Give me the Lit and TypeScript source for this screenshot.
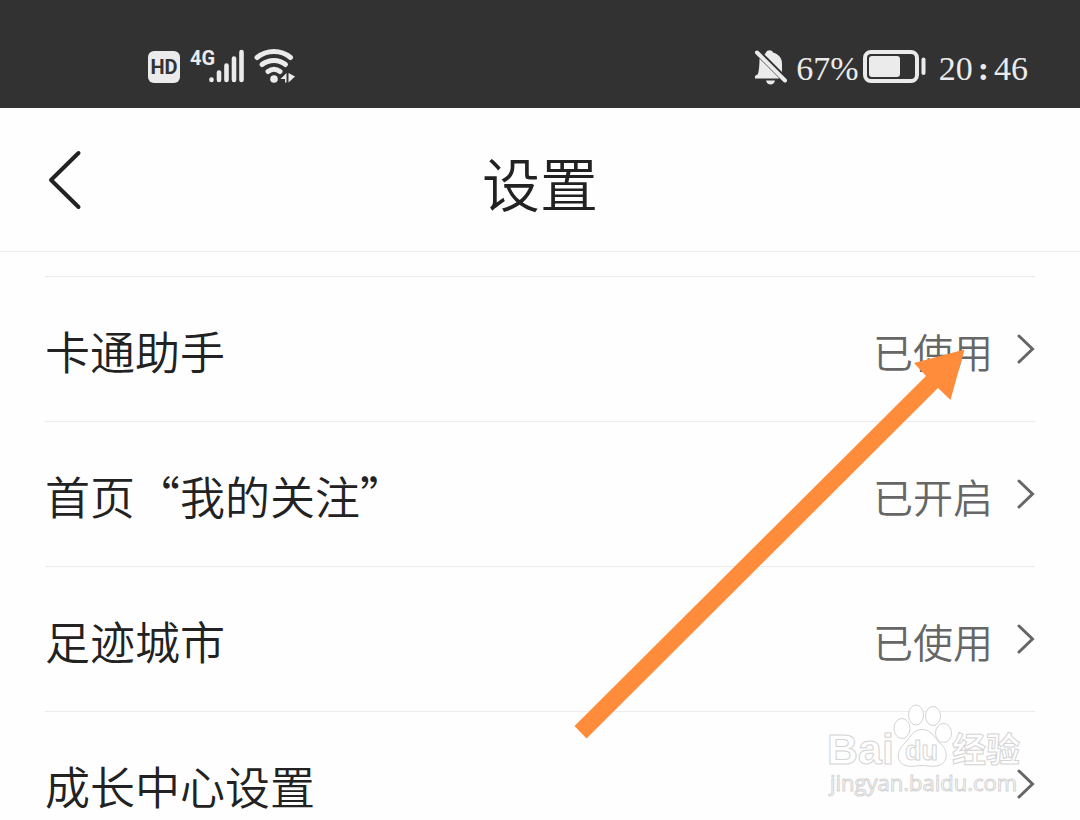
import { LitElement, html, css } from "lit";
import { customElement, property } from "lit/decorators.js";

interface Setting {
  label: string;
  value?: string;
}

const SETTINGS: Setting[] = [
  { label: "卡通助手", value: "已使用" },
  { label: "首页“我的关注”", value: "已开启" },
  { label: "足迹城市", value: "已使用" },
  { label: "成长中心设置" },
];

@customElement("status-bar")
class StatusBar extends LitElement {
  static styles = css`
    :host {
      display: flex;
      align-items: center;
      justify-content: space-between;
      box-sizing: border-box;
      height: 108px;
      padding: 26px 52px 0 147px;
      background: #323232;
      color: #ebebeb;
      font-family: "Liberation Serif", serif;
      font-size: 34px;
      line-height: 40px;
    }
    svg {
      display: block;
      flex: none;
    }
    .group {
      display: flex;
      align-items: center;
    }
    .network {
      fill: #ebebeb;
      font-family: "Roboto", sans-serif;
      font-weight: 700;
    }
    .hd {
      fill: #323232;
    }
    .percent {
      margin: 0 4px 0 8px;
      padding-top: 4px;
    }
    .clock {
      display: flex;
      margin-left: 12px;
      padding-top: 4px;
    }
    .colon {
      padding: 0 5px;
      font-weight: 700;
    }
  `;

  render() {
    return html`
      <div class="group">
        <svg class="network" width="150" height="40" viewBox="0 0 150 40" role="img" aria-label="HD 4G Wi-Fi">
          <rect x="1" y="4" width="32" height="32" rx="6" />
          <text class="hd" x="17" y="27" font-size="20" text-anchor="middle">HD</text>
          <text x="43" y="18" font-size="20">4G</text>
          <g stroke="#ebebeb" stroke-width="4.6" stroke-linecap="round" fill="none">
            <path d="M64.500 32.500V33M72 25.500V33M79.500 18.500V33M87 11.500V33M94.500 5V33" />
          </g>
          <g stroke="#ebebeb" stroke-width="5" stroke-linecap="round" fill="none">
            <path d="M110 10.500C120 2.500 134 2.500 143.500 10.500" />
            <path d="M115 17.500C122 12 132 12 138.500 17.500" />
            <path d="M121 24.500C125 21.500 129 21.500 133 24.500" />
          </g>
          <circle cx="127" cy="32" r="3.800" />
          <path d="M139.500 26V35.500H138V32H133.500ZM141.500 26L148 29.500L141.500 35.500Z" />
        </svg>
      </div>
      <div class="group">
        <svg width="34" height="36" viewBox="0 0 34 36" role="img" aria-label="静音">
          <path
            fill="#ebebeb"
            d="M12 3.500C13 .5 18 .5 19 3.500C25 5.500 28 9 28 15V23L10.500 5.500ZM5.500 9.500L25.500 29.500H1V27L4 25Q5.500 19 5.500 9.500ZM12 31.500H21Q20 35.500 16.500 35.500T12 31.500Z"
          />
          <path d="M3 3.500L31 31.500" stroke="#ebebeb" stroke-width="4" stroke-linecap="round" />
        </svg>
        <span class="percent">67%</span>
        <svg width="64" height="36" viewBox="0 0 64 36" role="img" aria-label="电量">
          <rect x="2" y="3" width="52" height="29" rx="6" fill="none" stroke="#ebebeb" stroke-width="4" />
          <rect x="6" y="7" width="31" height="21" rx="3" fill="#ebebeb" />
          <path d="M60.500 10.500V24" stroke="#ebebeb" stroke-width="4" stroke-linecap="round" />
        </svg>
        <span class="clock"><span>20</span><span class="colon">:</span><span>46</span></span>
      </div>
    `;
  }
}

@customElement("setting-row")
class SettingRow extends LitElement {
  @property() label = "";
  @property() value = "";

  static styles = css`
    :host {
      display: block;
      border-top: 1px solid #ebebeb;
    }
    .row {
      display: flex;
      align-items: center;
      box-sizing: border-box;
      width: 100%;
      height: 144px;
      padding: 0;
      border: 0;
      background: none;
      color: #222;
      font: inherit;
      font-size: 45px;
      line-height: 60px;
      text-align: left;
      cursor: pointer;
    }
    .label,
    .value {
      padding-top: 4px;
    }
    .label {
      flex: 1;
    }
    .value {
      margin-right: 24px;
      color: #666;
      font-size: 40px;
    }
    .chevron {
      display: block;
      flex: none;
    }
  `;

  render() {
    return html`
      <button class="row" type="button">
        <span class="label">${this.label}</span>
        <span class="value">${this.value}</span>
        <svg class="chevron" width="18" height="32" viewBox="0 0 18 32" aria-hidden="true">
          <path d="M2 3L15.500 16L2 29" fill="none" stroke="#666" stroke-width="3" stroke-linecap="round" />
        </svg>
      </button>
    `;
  }
}

@customElement("app-root")
class AppRoot extends LitElement {
  static styles = css`
    :host {
      display: block;
      position: relative;
      height: 100vh;
      overflow: hidden;
      background: #fefefe;
      color: #222;
      font-family: "Noto Sans CJK SC DemiLight", "Noto Sans CJK SC", sans-serif;
      font-weight: 350;
    }
    .header {
      display: grid;
      grid-template-columns: 1fr auto 1fr;
      align-items: center;
      height: 143px;
      padding: 0 45px;
      border-bottom: 1px solid #ebebeb;
    }
    .back {
      justify-self: start;
      padding: 0;
      border: 0;
      background: none;
      cursor: pointer;
    }
    .back svg {
      display: block;
    }
    .title {
      margin: 0;
      padding-top: 4px;
      font-size: 58px;
      line-height: 80px;
      font-weight: inherit;
    }
    .list {
      padding: 24px 45px 0;
    }
    .arrow {
      position: absolute;
      left: 574px;
      top: 349px;
      pointer-events: none;
    }
    .watermark {
      position: absolute;
      left: 826px;
      top: 702px;
      pointer-events: none;
      fill: #fff;
      stroke: #d4d4d4;
      stroke-width: 1;
    }
    .brand {
      font-family: "Liberation Sans", sans-serif;
      font-weight: 700;
    }
    .cjk {
      font-family: "Noto Sans CJK SC", sans-serif;
      font-weight: 700;
    }
    .site {
      font-family: "Open Sans", sans-serif;
      font-weight: 400;
    }
  `;

  render() {
    return html`
      <status-bar></status-bar>
      <header class="header">
        <button class="back" type="button" aria-label="返回">
          <svg width="40" height="64" viewBox="0 0 40 64">
            <path
              d="M33.500 5L6 32L33.500 59"
              fill="none"
              stroke="#222"
              stroke-width="4"
              stroke-linecap="round"
              stroke-linejoin="round"
            />
          </svg>
        </button>
        <h1 class="title">设置</h1>
      </header>
      <main class="list">
        ${SETTINGS.map(
          (s) => html`<setting-row .label=${s.label} .value=${s.value ?? ""}></setting-row>`
        )}
      </main>
      <svg class="watermark" width="200" height="100" viewBox="0 0 200 100" role="img" aria-label="Baidu 经验">
        <text class="brand" x="1" y="62" font-size="43">Bai</text>
        <ellipse cx="76" cy="26.500" rx="8" ry="10" />
        <ellipse cx="90" cy="13" rx="7.500" ry="10" />
        <ellipse cx="107" cy="14" rx="7.500" ry="9.500" />
        <ellipse cx="117.500" cy="31" rx="8" ry="9.500" />
        <path
          d="M96 27.500C106 27.500 109 37 115 42C123 49 122 62 111 64C106 65 101 63.500 96 63.500S86 65 81 64C70 62 70 49 78 42C84 37 86 27.500 96 27.500Z"
        />
        <text class="brand" x="79" y="58" font-size="27">du</text>
        <text class="cjk" x="126" y="60" font-size="34">经验</text>
        <text class="site" x="4" y="89" font-size="22">jingyan.baidu.com</text>
      </svg>
      <svg class="arrow" width="391" height="390" viewBox="0 0 391 390" aria-hidden="true">
        <path d="M0.500 377L352 27L340 14L390.500 0.500L376.500 51L364 39L12.500 389.500Z" fill="#ff8c3a" />
      </svg>
    `;
  }
}
